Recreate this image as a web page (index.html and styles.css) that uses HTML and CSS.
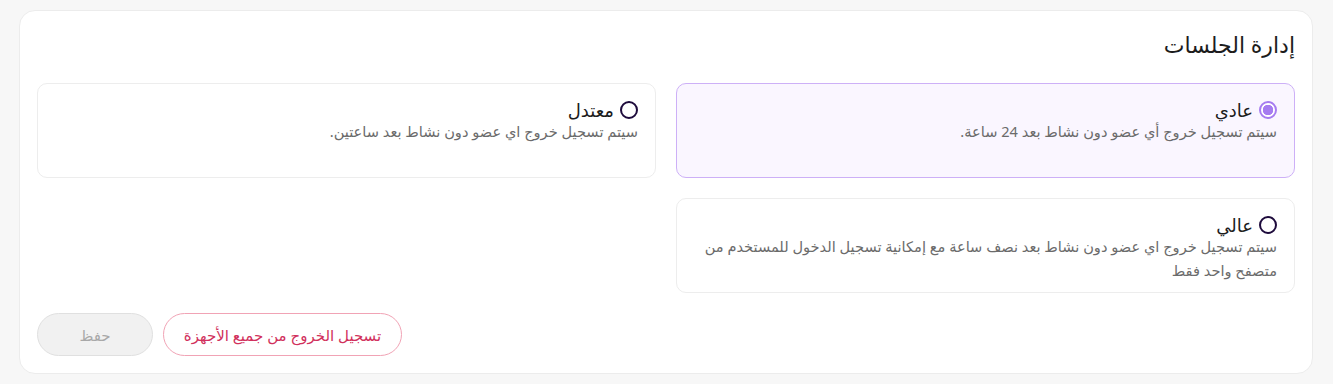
FILE: index.html
```html
<!DOCTYPE html>
<html lang="ar" dir="rtl">
<head>
<meta charset="utf-8">
<link rel="stylesheet" href="styles.css">
</head>
<body>
<div class="card">
  <h2 class="title">إدارة الجلسات</h2>
  <div class="options">
    <div class="option selected">
      <div class="head"><span class="radio on"></span><span class="label">عادي</span></div>
      <p class="desc">سيتم تسجيل خروج أي عضو دون نشاط بعد 24 ساعة.</p>
    </div>
    <div class="option">
      <div class="head"><span class="radio"></span><span class="label">معتدل</span></div>
      <p class="desc">سيتم تسجيل خروج اي عضو دون نشاط بعد ساعتين.</p>
    </div>
    <div class="option">
      <div class="head"><span class="radio"></span><span class="label">عالي</span></div>
      <p class="desc">سيتم تسجيل خروج اي عضو دون نشاط بعد نصف ساعة مع إمكانية تسجيل الدخول للمستخدم من متصفح واحد فقط</p>
    </div>
  </div>
  <div class="actions">
    <button class="btn logout">تسجيل الخروج من جميع الأجهزة</button>
    <button class="btn save" disabled>حفظ</button>
  </div>
</div>
</body>
</html>
```
FILE: styles.css
```css
* { box-sizing: border-box; }
html, body { margin: 0; padding: 0; }
body {
  background: #f7f7f7;
  font-family: "Noto Sans", "DejaVu Sans", sans-serif;
  padding: 10px 20px 10px 19px;
}
.card {
  background: #fff;
  border: 1px solid #ececec;
  border-radius: 16px;
  padding: 16px 17px 18px 17px;
  height: 364px;
}
.title {
  margin: 0 0 22px 0;
  font-size: 22px;
  font-weight: 400;
  line-height: 34px;
  color: #1c1c1c;
}
.options {
  display: grid;
  grid-template-columns: 1fr 1fr;
  gap: 20px;
}
.option {
  height: 95px;
  border: 1px solid #ededed;
  border-radius: 10px;
  padding: 15px 17px;
  background: #fff;
}
.option.selected {
  background: #faf6ff;
  border-color: #cdb0f7;
}
.head {
  display: flex;
  align-items: center;
  gap: 6px;
  height: 22px;
}
.radio {
  width: 18px;
  height: 18px;
  border-radius: 50%;
  border: 2px solid #1e0b3c;
  flex: none;
}
.radio.on {
  border-color: #a67cf0;
  background: radial-gradient(circle, #a67cf0 0 5px, #fff 5.5px);
}
.label {
  font-size: 18px;
  color: #1c1c1c;
  line-height: 22px;
}
.desc {
  margin: -2px 0 0 0;
  font-size: 14.6px;
  line-height: 24px;
  color: #6b6b6b;
}
.actions {
  display: flex;
  justify-content: flex-end;
  gap: 10px;
  margin-top: 20px;
}
.btn {
  font-family: inherit;
  height: 43px;
  border-radius: 22px;
  font-size: 15px;
  padding: 0 14px;
  background: #fff;
}
.logout {
  border: 1px solid #f1a3b5;
  color: #d1305c;
  width: 239px;
}
.save {
  width: 116px;
  background: #f1f1f1;
  border: 1px solid #e0e0e0;
  color: #a8a8a8;
}
```
